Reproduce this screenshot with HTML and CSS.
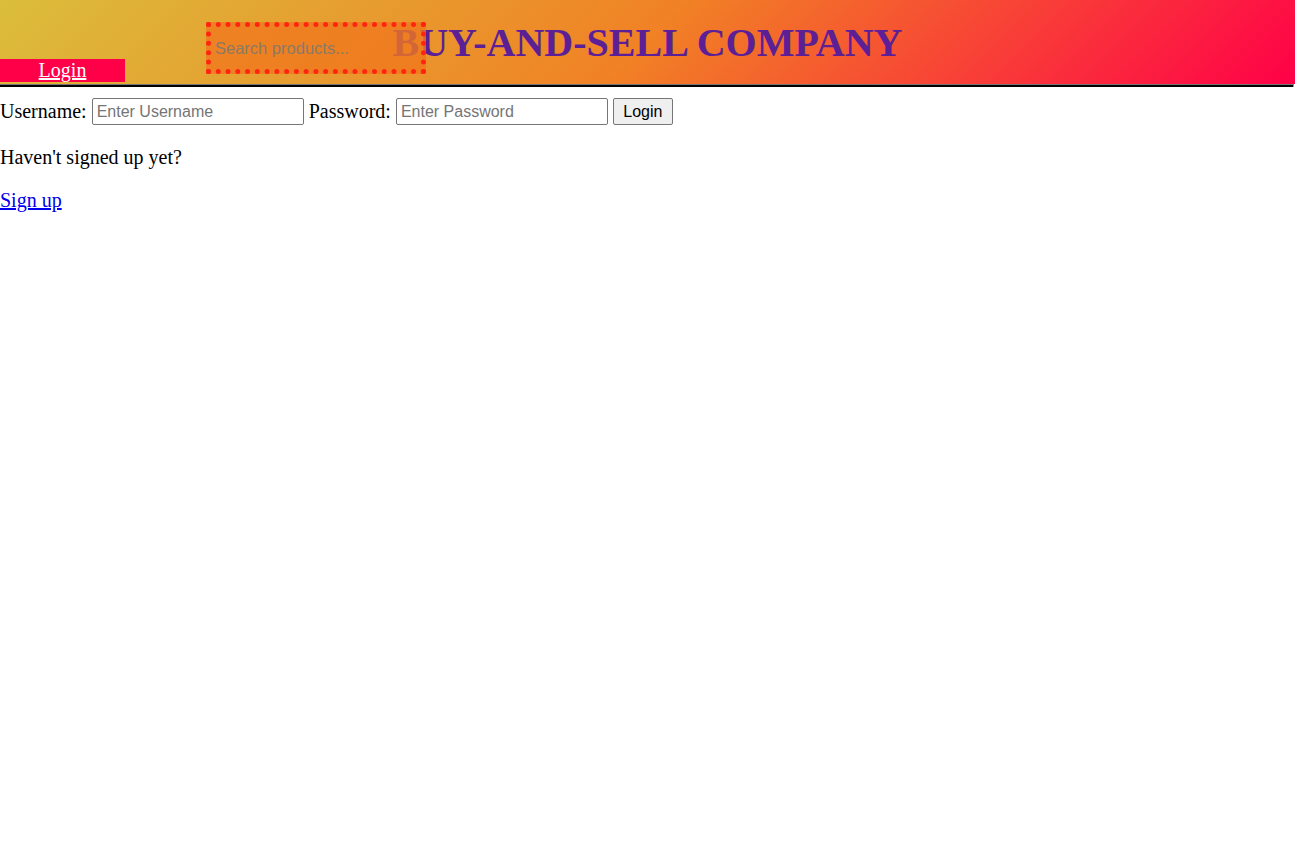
FILE: index.html
```html
<!DOCTYPE html>
<html lang="en">
<head>
<meta charset="utf-8">
<title>Buy-and-Sell Company</title>
<link rel="stylesheet" href="styles.css">
</head>
<body>
<header class="site-header">
  <h1 class="site-title">BUY-AND-SELL COMPANY</h1>
  <nav class="nav-row">
    <a class="nav-login" href="#">Login</a>
    <input class="search-box" type="text" placeholder="Search products...">
  </nav>
</header>
<div class="divider"></div>
<main class="content">
  <form class="login-row">
    <label class="field-label">Username:</label>
    <input class="text-field" type="text" placeholder="Enter Username">
    <label class="field-label">Password:</label>
    <input class="text-field" type="password" placeholder="Enter Password">
    <button class="login-btn" type="button">Login</button>
  </form>
  <p class="note">Haven't signed up yet?</p>
  <p class="signup"><a href="#">Sign up</a></p>
</main>
</body>
</html>
```
FILE: styles.css
```css
html, body {
  margin: 0;
  padding: 0;
  background: #ffffff;
}

body {
  font-family: "Liberation Serif", "Times New Roman", serif;
  font-size: 20px;
  color: #000;
}

.site-header {
  display: grid;
  height: 84px;
  background: linear-gradient(135deg, #dbbd3b 0%, #f18125 50%, #ff0048 100%);
}

.site-title {
  grid-area: 1 / 1;
  justify-self: center;
  align-self: start;
  margin: 20px 0 0 0;
  font-family: "Liberation Serif", "Times New Roman", serif;
  font-size: 40px;
  font-weight: bold;
  line-height: 46px;
  color: #5d1f96;
  white-space: nowrap;
}

.nav-row {
  grid-area: 1 / 1;
  display: flex;
  align-items: flex-start;
  z-index: 1;
}

.nav-login {
  display: block;
  width: 125px;
  height: 23px;
  line-height: 23px;
  margin-top: 59px;
  background: #ff0048;
  color: #ffffff;
  text-align: center;
  font-size: 20px;
  text-decoration: underline;
}

.search-box {
  box-sizing: border-box;
  width: 220px;
  height: 52px;
  margin: 22px 0 0 81px;
  padding: 0 4px;
  border: 5px dotted #ff2511;
  background: rgba(240, 120, 30, 0.8);
  font-family: "Liberation Sans", Arial, sans-serif;
  font-size: 16.5px;
  color: #333;
  outline: none;
}

.search-box::placeholder {
  color: #8a7a66;
}

.divider {
  box-sizing: border-box;
  width: 1294px;
  height: 3px;
  background: #000;
  border-top: 1px solid #777;
  border-right: 1px solid #999;
}

.content {
  padding: 0;
}

.login-row {
  display: flex;
  align-items: center;
  gap: 5px;
  margin: 11px 0 0 0;
}

.field-label {
  font-size: 20px;
  line-height: 23px;
}

.text-field {
  box-sizing: border-box;
  width: 212px;
  height: 27px;
  margin: 0;
  padding: 0 4px;
  border: 1px solid #767676;
  border-radius: 2px;
  font-family: "Liberation Sans", Arial, sans-serif;
  font-size: 16px;
  color: #000;
  background: #fff;
}

.text-field::placeholder {
  color: #757575;
}

.login-btn {
  box-sizing: border-box;
  width: 60px;
  height: 27px;
  margin: 0;
  padding: 0;
  border: 1px solid #767676;
  border-radius: 2px;
  background: #efefef;
  font-family: "Liberation Sans", Arial, sans-serif;
  font-size: 16px;
  color: #000;
}

.note {
  margin: 21px 0 0 0;
  line-height: 23px;
}

.signup {
  margin: 20px 0 0 0;
  line-height: 23px;
}

.signup a {
  color: #0000ee;
  text-decoration: underline;
}
```
